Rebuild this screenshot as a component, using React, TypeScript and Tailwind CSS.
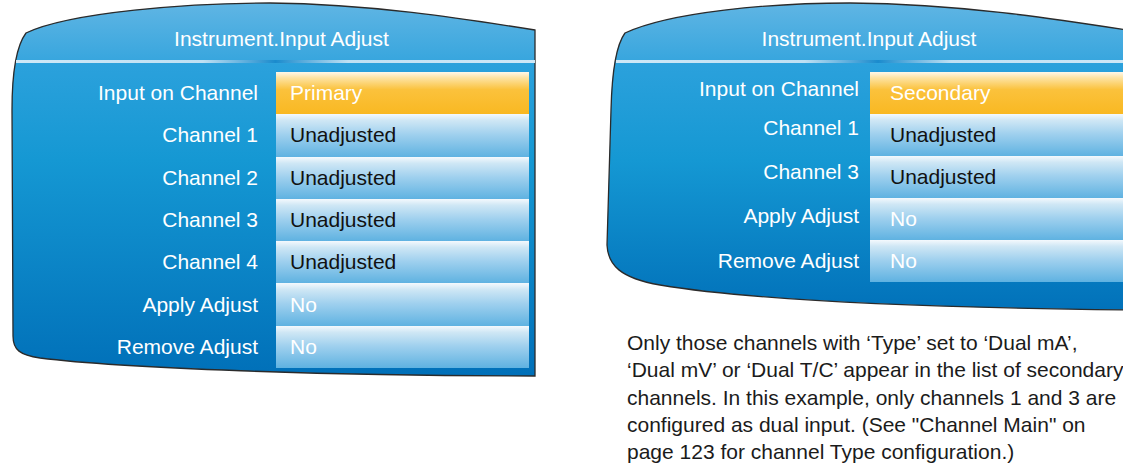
import React from 'react';

type Row = { label: string; value: string; selected?: boolean; dark?: boolean; shift?: string };

const leftRows: Row[] = [
  { label: 'Input on Channel', value: 'Primary', selected: true },
  { label: 'Channel 1', value: 'Unadjusted', dark: true },
  { label: 'Channel 2', value: 'Unadjusted', dark: true },
  { label: 'Channel 3', value: 'Unadjusted', dark: true },
  { label: 'Channel 4', value: 'Unadjusted', dark: true },
  { label: 'Apply Adjust', value: 'No' },
  { label: 'Remove Adjust', value: 'No' },
];

const rightRows: Row[] = [
  { label: 'Input on Channel', value: 'Secondary', selected: true, shift: '-translate-y-[4px]' },
  { label: 'Channel 1', value: 'Unadjusted', dark: true, shift: '-translate-y-[7px]' },
  { label: 'Channel 3', value: 'Unadjusted', dark: true, shift: '-translate-y-[5px]' },
  { label: 'Apply Adjust', value: 'No', shift: '-translate-y-[3px]' },
  { label: 'Remove Adjust', value: 'No' },
];

const selBg = 'bg-[linear-gradient(to_bottom,#fff8ea_0%,#fde3a2_14%,#fbc23c_42%,#f9b822_100%)] text-white';
const valBg = 'bg-[linear-gradient(to_bottom,#f4f9fd_0%,#cfe7f5_15%,#9fd0ee_48%,#5fb2e1_100%)]';

// the curved bezel outline behind each screen
const PanelShape = ({ id, d, height }: { id: string; d: string; height: number }) => (
  <svg className="absolute left-0 top-0" width="540" height={height} viewBox={`0 0 540 ${height}`}>
    <defs>
      <linearGradient id={id} x1="0" y1="0" x2="0" y2={height} gradientUnits="userSpaceOnUse">
        <stop offset="0" stopColor="#62b6e4" />
        <stop offset={60 / height} stopColor="#38a6de" />
        <stop offset={64 / height} stopColor="#2ba1dc" />
        <stop offset={160 / height} stopColor="#1598d3" />
        <stop offset="1" stopColor="#006fb8" />
      </linearGradient>
    </defs>
    <path d={d} fill={`url(#${id})`} stroke="#2b2b2b" strokeWidth="1.3" />
  </svg>
);

const Panel = ({
  rows, rowH, labelW, gap, boxW, valuePad, titleW, lineW, shape, shapeH, id, height,
}: {
  rows: Row[]; rowH: string; labelW: string; gap: string; boxW: string; valuePad: string;
  titleW: string; lineW: string; shape: string; shapeH: number; id: string; height: string;
}) => (
  <div className={`relative w-[540px] shrink-0 ${height}`}>
    <PanelShape id={id} d={shape} height={shapeH} />
    <div className="relative flex flex-col">
      <div className={`ml-[28px] h-[60px] pt-[27px] text-center text-[21px] leading-[24px] text-white ${titleW}`}>
        Instrument.Input Adjust
      </div>
      <div className={`ml-[16px] h-[3px] bg-[linear-gradient(to_right,#cfe8f7_0%,#bfe0f3_36%,#1a8bcd_50%,#bfe0f3_64%,#cfe8f7_100%)] ${lineW}`} />
      <div className="mt-[9px] flex flex-col">
        {rows.map((r) => (
          <div key={r.label} className={`flex items-center ${rowH} ${gap}`}>
            <div className={`text-right text-[21px] leading-[24px] text-white ${labelW} ${r.shift || ''}`}>{r.label}</div>
            <div
              className={`flex h-full items-center text-[21px] leading-[24px] ${boxW} ${valuePad} ${
                r.selected ? selBg : valBg
              } ${r.dark ? 'text-[#111]' : 'text-white'}`}
            >
              {r.value}
            </div>
          </div>
        ))}
      </div>
    </div>
  </div>
);

export default function App() {
  return (
    <div className="flex h-[466px] w-[1123px] overflow-hidden bg-white font-['Liberation_Sans',Arial,sans-serif]">
      <Panel
        id="gl"
        rows={leftRows}
        rowH="h-[42.3px]"
        labelW="w-[258px]"
        gap="gap-[18px]"
        boxW="w-[253px]"
        valuePad="pl-[14px]"
        titleW="w-[507px]"
        lineW="w-[519px]"
        height="h-[380px]"
        shapeH={380}
        shape="M 26 33 C 70 12, 190 3, 270 3 C 370 4, 460 18, 535 30 L 535 376 C 330 376, 120 368, 40 358 C 20 355, 13 350, 13 336 L 12 110 C 12 70, 17 45, 26 33 Z"
      />
      <div className="ml-[60px] flex flex-col">
        <Panel
          id="gr"
          rows={rightRows}
          rowH="h-[42px]"
          labelW="w-[259px]"
          gap="gap-[11px]"
          boxW="w-[270px]"
          valuePad="pl-[20px]"
          titleW="w-[482px]"
          lineW="w-[524px]"
          height="h-[310px]"
          shapeH={320}
          shape="M 25 33 C 70 12, 170 3, 250 3 C 360 4, 450 18, 540 32 L 540 310 C 330 308, 150 300, 60 285 C 20 278, 8 265, 7 245 L 11 110 C 12 70, 16 45, 25 33 Z"
        />
        <p className="ml-[27px] mt-[19px] whitespace-nowrap text-[21px] leading-[27.3px] text-[#1b1b1b]">
          Only those channels with ‘Type’ set to ‘Dual mA’,
          <br />
          ‘Dual mV’ or ‘Dual T/C’ appear in the list of secondary
          <br />
          channels. In this example, only channels 1 and 3 are
          <br />
          configured as dual input. (See "Channel Main" on
          <br />
          page 123 for channel Type configuration.)
        </p>
      </div>
    </div>
  );
}
